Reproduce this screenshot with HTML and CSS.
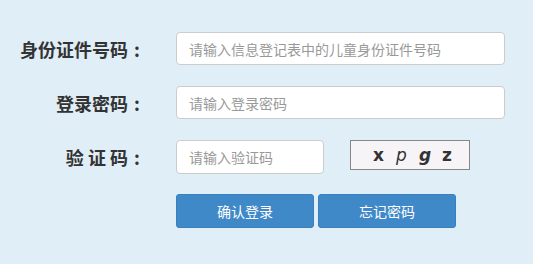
FILE: index.html
```html
<!DOCTYPE html>
<html lang="zh-CN">
<head>
<meta charset="utf-8">
<title>登录</title>
<link rel="stylesheet" href="styles.css">
</head>
<body>
<form class="login">
  <div class="row">
    <label class="label">身份证件号码<span class="colon">:</span></label>
    <input class="field field-wide" type="text" placeholder="请输入信息登记表中的儿童身份证件号码">
  </div>
  <div class="row">
    <label class="label">登录密码<span class="colon">:</span></label>
    <input class="field field-wide" type="password" placeholder="请输入登录密码">
  </div>
  <div class="row">
    <label class="label">验 证 码<span class="colon">:</span></label>
    <input class="field field-code" type="text" placeholder="请输入验证码">
    <div class="captcha"><span class="c1">x</span><span class="c2">p</span><span class="c3">g</span><span class="c4">z</span></div>
  </div>
  <div class="row row-actions">
    <span class="label"></span>
    <button class="btn" type="button">确认登录</button>
    <button class="btn" type="button">忘记密码</button>
  </div>
</form>
</body>
</html>
```
FILE: styles.css
```css
html, body {
  margin: 0;
  padding: 0;
  background: #e0eef7;
}
body {
  font-family: "Noto Sans CJK SC", "Noto Sans", "Liberation Sans", sans-serif;
  color: #333;
  width: 533px;
  height: 264px;
}
.login {
  display: flex;
  flex-direction: column;
  gap: 21px;
  padding-top: 32px;
}
.row {
  display: flex;
  align-items: center;
}
.row-actions {
  margin-top: -1px;
}
.label {
  width: 146px;
  flex: none;
  text-align: right;
  font-size: 18px;
  font-weight: bold;
  color: #333;
  margin-right: 30px;
  white-space: pre;
  line-height: 24px;
}
.colon {
  display: inline-block;
  width: 18px;
  text-align: center;
}
.field {
  box-sizing: border-box;
  height: 33px;
  border: 1px solid #ccc;
  border-radius: 4px;
  background: #fff;
  padding: 0 12px;
  font-family: inherit;
  font-size: 14px;
  color: #555;
  outline: none;
}
.field::placeholder {
  color: #999;
}
.field-wide {
  width: 329px;
}
.field-code {
  width: 148px;
  height: 34px;
}
.captcha {
  box-sizing: border-box;
  margin-left: 26px;
  width: 120px;
  height: 30px;
  align-self: flex-start;
  border: 1px solid #888;
  background: #f6f4f6;
  display: flex;
  align-items: center;
  padding-left: 22px;
  font-family: "DejaVu Sans", sans-serif;
  font-size: 17px;
  color: #333;
}
.captcha span {
  display: inline-block;
  width: 23px;
}
.c1 { font-weight: bold; }
.c2 { font-style: italic; }
.c3 { font-weight: bold; font-style: italic; }
.c4 { font-weight: bold; }
.btn {
  box-sizing: border-box;
  width: 138px;
  height: 34px;
  margin-right: 4px;
  border: 1px solid #3a7fbe;
  border-radius: 3px;
  background: #3f89c9;
  color: #fff;
  font-family: inherit;
  font-size: 14px;
  padding: 0;
}
```
